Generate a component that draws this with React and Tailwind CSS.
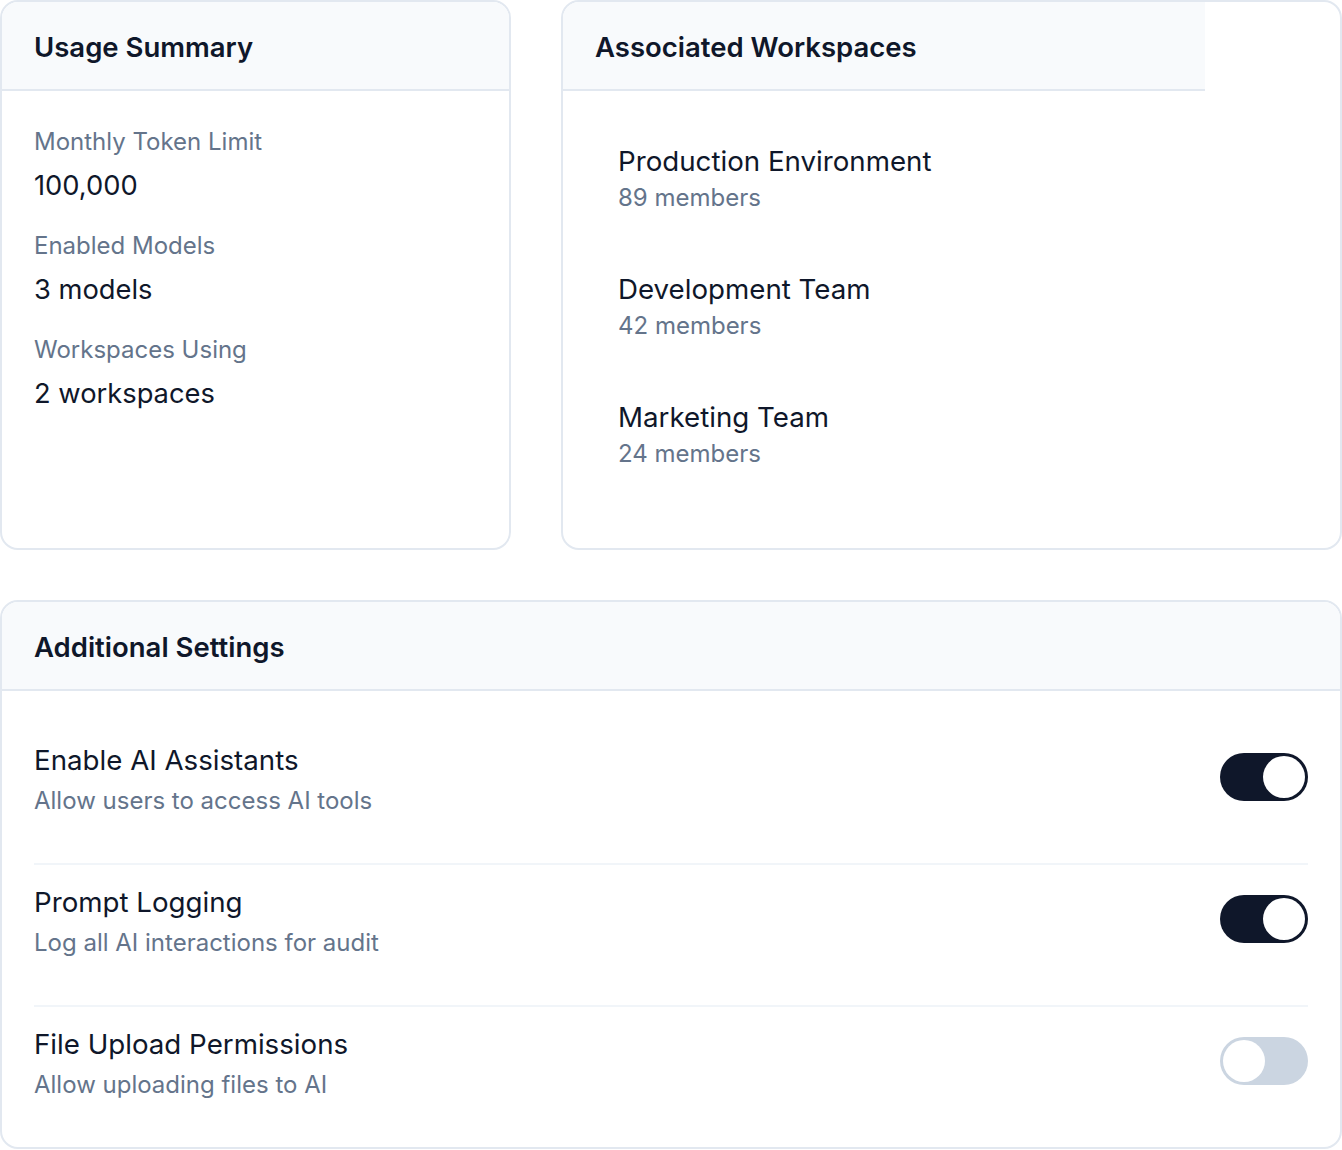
import React, { useState } from 'react';

const usage = [
  { label: 'Monthly Token Limit', value: '100,000' },
  { label: 'Enabled Models', value: '3 models' },
  { label: 'Workspaces Using', value: '2 workspaces' },
];

const workspaces = [
  { name: 'Production Environment', members: 89 },
  { name: 'Development Team', members: 42 },
  { name: 'Marketing Team', members: 24 },
];

const initialSettings = [
  { id: 'assistants', title: 'Enable AI Assistants', desc: 'Allow users to access AI tools', on: true },
  { id: 'logging', title: 'Prompt Logging', desc: 'Log all AI interactions for audit', on: true },
  { id: 'uploads', title: 'File Upload Permissions', desc: 'Allow uploading files to AI', on: false },
];

function Toggle({ on, onClick }) {
  return (
    <button
      onClick={onClick}
      className={`flex items-center w-[88px] h-[48px] mt-[11px] rounded-full p-[3px] shrink-0 ${
        on ? 'bg-[#0f172a] justify-end' : 'bg-[#cbd5e1] justify-start'
      }`}
    >
      <span className="block w-[42px] h-[42px] rounded-full bg-white" />
    </button>
  );
}

function CardHeader({ title, className = '' }) {
  return (
    <div className={`h-[89px] flex items-center px-[32px] pt-[4px] bg-[#f8fafc] border-b-2 border-[#e2e8f0] ${className}`}>
      <h2 className="text-[27.5px] font-semibold text-[#0f172a] leading-none">{title}</h2>
    </div>
  );
}

export default function App() {
  const [settings, setSettings] = useState(initialSettings);

  const toggle = (id) =>
    setSettings((prev) => prev.map((s) => (s.id === id ? { ...s, on: !s.on } : s)));

  return (
    <div className="w-[1342px] bg-white font-['Inter',sans-serif] flex flex-col gap-[50px]">
      <div className="grid grid-cols-[511px_781px] gap-[50px]">
        <div className="h-[550px] rounded-[18px] border-2 border-[#e2e8f0] overflow-hidden">
          <CardHeader title="Usage Summary" />
          <div className="px-[32px] pt-[35px] flex flex-col gap-[26px]">
            {usage.map((u) => (
              <div key={u.label} className="flex flex-col">
                <span className="text-[24px] text-[#64748b] leading-[32px]">{u.label}</span>
                <span className="text-[27.3px] text-[#0f172a] leading-[36px] mt-[10px]">{u.value}</span>
              </div>
            ))}
          </div>
        </div>

        <div className="h-[550px] rounded-[18px] border-2 border-[#e2e8f0] overflow-hidden">
          <CardHeader title="Associated Workspaces" className="w-[642px]" />
          <div className="px-[55px] pt-[52px] flex flex-col gap-[57px]">
            {workspaces.map((w) => (
              <div key={w.name} className="flex flex-col">
                <span className="text-[27.7px] text-[#0f172a] leading-[36px]">{w.name}</span>
                <span className="text-[24px] text-[#64748b] leading-[32px] mt-[3px]">
                  {w.members} members
                </span>
              </div>
            ))}
          </div>
        </div>
      </div>

      <div className="rounded-[18px] border-2 border-[#e2e8f0] overflow-hidden">
        <CardHeader title="Additional Settings" />
        <div className="px-[32px] pt-[32px]">
          {settings.map((s, i) => (
            <div
              key={s.id}
              className={`flex items-start justify-between pt-[19px] pb-[46px] ${
                i < settings.length - 1 ? 'border-b-2 border-[#f1f5f9]' : ''
              }`}
            >
              <div className="flex flex-col">
                <span className="text-[27.7px] text-[#0f172a] leading-[36px]">{s.title}</span>
                <span className="text-[24px] text-[#64748b] leading-[32px] mt-[7px]">{s.desc}</span>
              </div>
              <Toggle on={s.on} onClick={() => toggle(s.id)} />
            </div>
          ))}
        </div>
      </div>
    </div>
  );
}
